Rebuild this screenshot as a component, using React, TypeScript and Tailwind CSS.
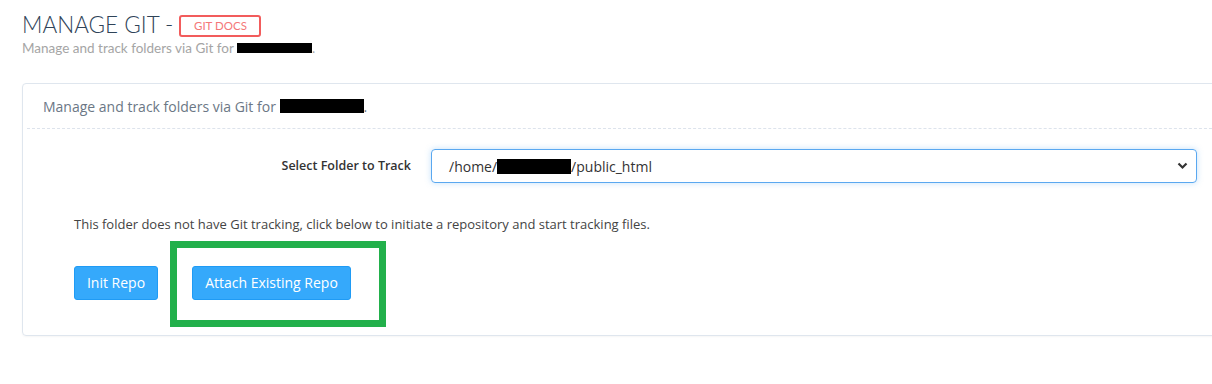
import React from "react";

const Redact = ({ w, h }: { w: number; h: number }) => (
  <span className="inline-block bg-black align-middle" style={{ width: w, height: h }} />
);

export default function App() {
  return (
    <div className="w-[1212px] h-[384px] overflow-hidden bg-white" style={{ fontFamily: '"Open Sans", "Liberation Sans", sans-serif' }}>
      <div className="pl-[22px] pt-[10px]">
        <div className="flex items-center">
          <h1 className="text-[22.5px] leading-[30px] font-light text-[#2f4358]" style={{ fontFamily: 'Lato, "Open Sans", sans-serif' }}>
            MANAGE GIT -
          </h1>
          <span className="ml-[6px] mt-[2px] inline-flex h-[22px] w-[82px] items-center justify-center rounded-[3px] border-2 border-[#f25c5c] text-[11.5px] text-[#f47777]" style={{ fontFamily: 'Lato, "Open Sans", sans-serif' }}>
            GIT DOCS
          </span>
        </div>
        <div className="mt-[1px] flex items-center text-[13.5px] leading-[14px] text-[#a5a5a5]" style={{ fontFamily: 'Lato, "Open Sans", sans-serif' }}>
          <span>Manage and track folders via Git for&nbsp;</span>
          <Redact w={75} h={10} />
          <span>.</span>
        </div>
      </div>

      <div className="relative ml-[22px] mt-[28px] w-[1220px] rounded-[4px] border border-[#dfe6ee] shadow-[0_1px_2px_rgba(0,0,0,0.04)]">
        <div className="mx-[4px] flex h-[45px] items-center border-b border-dashed border-[#dde3ec] pl-[16px] text-[14px] text-[#6b7785]">
          <span>Manage and track folders via Git for&nbsp;</span>
          <Redact w={84} h={14} />
          <span>.</span>
        </div>

        <div className="pt-[20px] pb-[35px]">
          <div className="flex items-center">
            <label className="w-[388px] text-right text-[12.5px] font-semibold text-[#333]">Select Folder to Track</label>
            <div className="ml-[20px] flex h-[34px] w-[766px] items-center justify-between rounded-[4px] border border-[#5aa8f0] pl-[17px] pr-[8px] text-[14px] text-[#333] shadow-[0_0_6px_rgba(90,168,240,0.35)]">
              <span className="flex items-center">
                /home/<Redact w={74} h={15} />/public_html
              </span>
              <svg width="11" height="8" viewBox="0 0 11 8">
                <path d="M1.5 1.5 L5.5 5.5 L9.5 1.5" fill="none" stroke="#333" strokeWidth="2.2" />
              </svg>
            </div>
          </div>

          <p className="mt-[32px] pl-[51px] text-[13px] text-[#444]">
            This folder does not have Git tracking, click below to initiate a repository and start tracking files.
          </p>

          <div className="relative mt-[31px] flex pl-[51px]">
            <button className="h-[34px] w-[84px] rounded-[3px] border border-[#1f9bf5] bg-[#35a9fb] text-[14px] text-white">Init Repo</button>
            <button className="ml-[34px] h-[34px] w-[159px] rounded-[3px] border border-[#1f9bf5] bg-[#35a9fb] text-[14px] text-white">Attach Existing Repo</button>
            <div className="pointer-events-none absolute left-[147px] top-[-25px] h-[86px] w-[216px] border-[7px] border-[#22b04b]" />
          </div>
        </div>
      </div>
    </div>
  );
}
